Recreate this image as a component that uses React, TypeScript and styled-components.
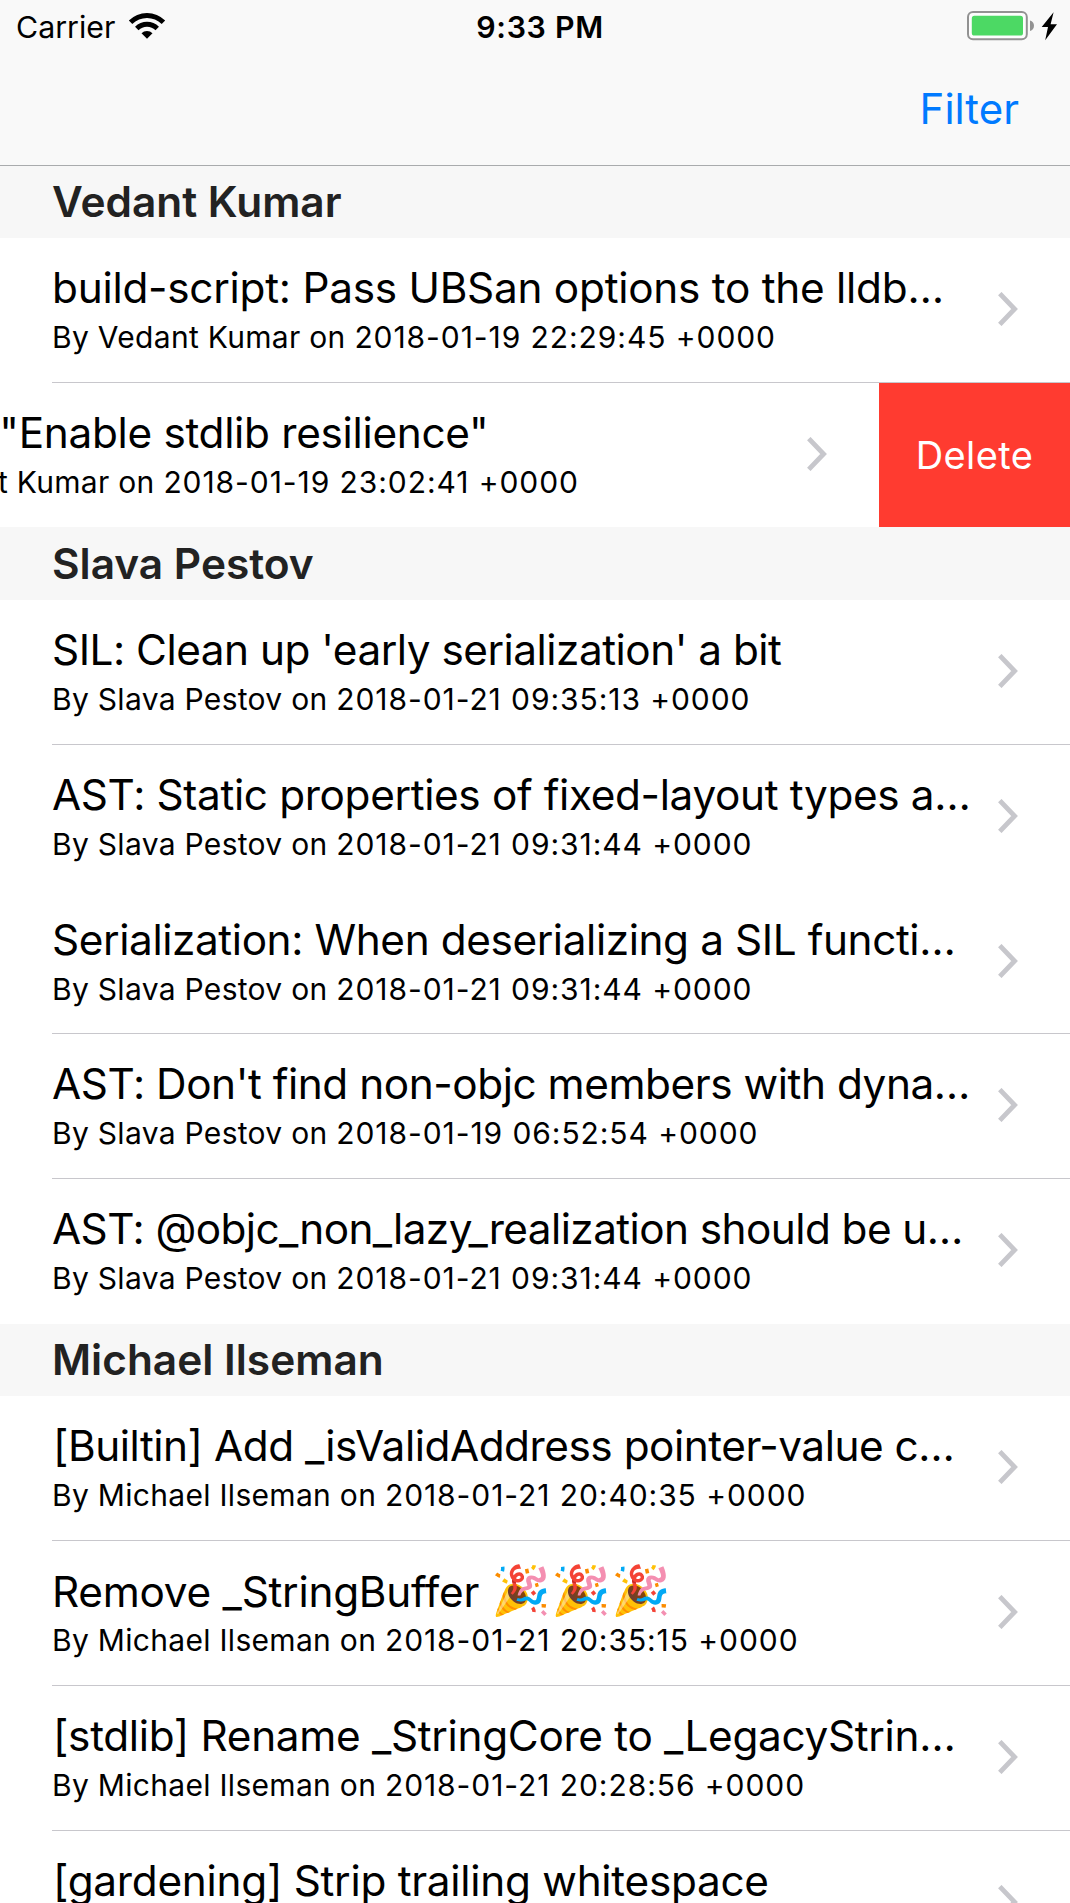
import React from "react";
import styled, { createGlobalStyle } from "styled-components";

const GlobalStyle = createGlobalStyle`
  html, body {
    margin: 0;
    background: #ffffff;
  }
  body {
    font-family: Inter, "Liberation Sans", sans-serif;
    color: #000000;
  }
`;

const Screen = styled.div`
  width: 1070px;
  height: 1903px;
  overflow: hidden;
  display: flex;
  flex-direction: column;
  background: #ffffff;
`;

const TopBar = styled.header`
  flex: none;
  height: 165px;
  display: flex;
  flex-direction: column;
  background: #f9f9f9;
  border-bottom: 1px solid #a9abad;
`;

const StatusBar = styled.div`
  height: 54px;
  display: grid;
  grid-template-columns: 1fr auto 1fr;
  padding: 0 6px 0 16px;
  line-height: 54px;
`;

const StatusLeft = styled.div`
  display: flex;
  align-items: flex-start;
  gap: 13px;
`;

const Carrier = styled.span`
  font-size: 30.3px;
`;

const WifiIcon = styled.svg`
  flex: none;
  width: 38px;
  height: 27px;
  margin-top: 12px;
`;

const Clock = styled.span`
  font-size: 30.3px;
  font-weight: 600;
  letter-spacing: 0.7px;
`;

const StatusRight = styled.div`
  display: flex;
  align-items: flex-start;
  justify-content: flex-end;
  padding: 11px 7px 0 0;
`;

const PowerIcon = styled.svg`
  flex: none;
  width: 90px;
  height: 30px;
`;

const NavBar = styled.nav`
  height: 111px;
  display: flex;
  justify-content: flex-end;
  padding-right: 51px;
`;

const NavButton = styled.button`
  border: 0;
  padding: 0 0 2px;
  background: none;
  color: #007aff;
  font: 400 42px/108px Inter, "Liberation Sans", sans-serif;
`;

const List = styled.main`
  flex: 1;
  min-height: 0;
  display: flex;
  flex-direction: column;
`;

const SectionTitle = styled.h2<{ $height: number }>`
  flex: none;
  height: ${(p) => p.$height}px;
  margin: 0;
  padding-left: 52px;
  background: #f7f7f7;
  color: #222222;
  font-size: 42.4px;
  font-weight: 600;
  line-height: ${(p) => p.$height}px;
`;

const Row = styled.article<{ $height: number }>`
  flex: none;
  height: ${(p) => p.$height}px;
  display: flex;
  overflow: hidden;
`;

const Cell = styled.div<{ $swiped: boolean; $line: boolean }>`
  flex: none;
  box-sizing: border-box;
  width: 1018px;
  display: flex;
  align-items: flex-start;
  justify-content: space-between;
  margin-left: ${(p) => (p.$swiped ? -139 : 52)}px;
  padding-right: 52px;
  border-bottom: ${(p) => (p.$line ? "1px solid #c8c7cc" : "0")};
`;

const Texts = styled.div`
  display: flex;
  flex-direction: column;
  gap: 6px;
  padding-top: 25px;
  white-space: pre;
`;

const Title = styled.div<{ $track: number; $indent: number }>`
  height: 50px;
  padding-left: ${(p) => p.$indent}px;
  font-size: 42.3px;
  line-height: 50px;
  letter-spacing: ${(p) => p.$track}px;
`;

const Emoji = styled.span`
  font-size: 48px;
  line-height: 1;
  letter-spacing: 0;
`;

const Detail = styled.div`
  height: 36px;
  font-size: 30px;
  line-height: 36px;
  letter-spacing: 0.3px;
`;

const Stamp = styled.span`
  letter-spacing: 0.93px;
`;

const Chevron = styled.svg`
  flex: none;
  width: 20px;
  height: 34px;
  margin-top: 54px;
`;

const DeleteButton = styled.button`
  flex: none;
  width: 191px;
  border: 0;
  padding: 0;
  background: #ff3b30;
  color: #ffffff;
  font: 400 38px/144px Inter, "Liberation Sans", sans-serif;
  letter-spacing: 0.4px;
`;

type Commit = {
  title: string;
  emoji?: string;
  date: string;
  track: number;
  indent?: number;
  line?: boolean;
  swiped?: boolean;
  height?: number;
};

type Section = { author: string; height: number; commits: Commit[] };

const sections: Section[] = [
  {
    author: "Vedant Kumar",
    height: 72,
    commits: [
      { title: "build-script: Pass UBSan options to the lldb…", date: "2018-01-19 22:29:45", track: -0.25, line: true },
      { title: 'Revert "Enable stdlib resilience"', date: "2018-01-19 23:02:41", track: -0.3, swiped: true, height: 144 },
    ],
  },
  {
    author: "Slava Pestov",
    height: 73,
    commits: [
      { title: "SIL: Clean up 'early serialization' a bit", date: "2018-01-21 09:35:13", track: -0.49, line: true },
      { title: "AST: Static properties of fixed-layout types a…", date: "2018-01-21 09:31:44", track: -0.35 },
      { title: "Serialization: When deserializing a SIL functi…", date: "2018-01-21 09:31:44", track: -0.4, line: true, height: 144 },
      { title: "AST: Don't find non-objc members with dyna…", date: "2018-01-19 06:52:54", track: -0.44, line: true },
      { title: "AST: @objc_non_lazy_realization should be u…", date: "2018-01-21 09:31:44", track: -0.57 },
    ],
  },
  {
    author: "Michael Ilseman",
    height: 72,
    commits: [
      { title: "[Builtin] Add _isValidAddress pointer-value c…", date: "2018-01-21 20:40:35", track: -0.46, indent: 1, line: true },
      { title: "Remove _StringBuffer ", emoji: "🎉🎉🎉", date: "2018-01-21 20:35:15", track: -0.25, line: true },
      { title: "[stdlib] Rename _StringCore to _LegacyStrin…", date: "2018-01-21 20:28:56", track: -0.31, indent: 1, line: true },
      { title: "[gardening] Strip trailing whitespace", date: "2018-01-21 20:28:56", track: -0.27, indent: 1, line: true },
    ],
  },
];

function CommitRow({ commit, author }: { commit: Commit; author: string }) {
  return (
    <Row $height={commit.height ?? 145}>
      <Cell $swiped={!!commit.swiped} $line={!!commit.line}>
        <Texts>
          <Title $track={commit.track} $indent={commit.indent ?? 0}>
            {commit.title}
            {commit.emoji && <Emoji>{commit.emoji}</Emoji>}
          </Title>
          <Detail>
            {`By ${author} on `}
            <Stamp>{`${commit.date} +0000`}</Stamp>
          </Detail>
        </Texts>
        <Chevron viewBox="0 0 20 34">
          <path d="M1.8 1.6 16.6 17 1.8 32.4" fill="none" stroke="#c7c7cc" strokeWidth="4.8" />
        </Chevron>
      </Cell>
      {commit.swiped && <DeleteButton>Delete</DeleteButton>}
    </Row>
  );
}

export default function App() {
  return (
    <>
      <GlobalStyle />
      <Screen>
        <TopBar>
          <StatusBar>
            <StatusLeft>
              <Carrier>Carrier</Carrier>
              <WifiIcon viewBox="-19 -26.7 38 27">
                <path d="M-18.17 -18.17A25.7 25.7 0 0 1 18.17 -18.17L14.7 -14.7A20.8 20.8 0 0 0 -14.7 -14.7Z" />
                <path d="M-11.95 -11.95A16.9 16.9 0 0 1 11.95 -11.95L8.5 -8.5A12 12 0 0 0 -8.5 -8.5Z" />
                <path d="M-5.5 -5.5A7.8 7.8 0 0 1 5.5 -5.5L0 0Z" />
              </WifiIcon>
            </StatusLeft>
            <Clock>9:33 PM</Clock>
            <StatusRight>
              <PowerIcon viewBox="0 0 90 30">
                <rect x="1" y="1.1" width="58.8" height="27.2" rx="5" fill="#fdfdfd" stroke="#929292" strokeWidth="2" />
                <rect x="4.8" y="4.8" width="51.2" height="19.7" rx="2.6" fill="#4cd964" />
                <path d="M63 9.6C65.7 10.3 67 12.3 67 14.8S65.7 19.2 63 20Z" fill="#929292" />
                <path d="M86.6 1.3 74.7 16H81L78.2 29.3 90 13.2H83.6Z" />
              </PowerIcon>
            </StatusRight>
          </StatusBar>
          <NavBar>
            <NavButton>Filter</NavButton>
          </NavBar>
        </TopBar>
        <List>
          {sections.map((section) => (
            <React.Fragment key={section.author}>
              <SectionTitle $height={section.height}>{section.author}</SectionTitle>
              {section.commits.map((commit) => (
                <CommitRow key={commit.title} commit={commit} author={section.author} />
              ))}
            </React.Fragment>
          ))}
        </List>
      </Screen>
    </>
  );
}
